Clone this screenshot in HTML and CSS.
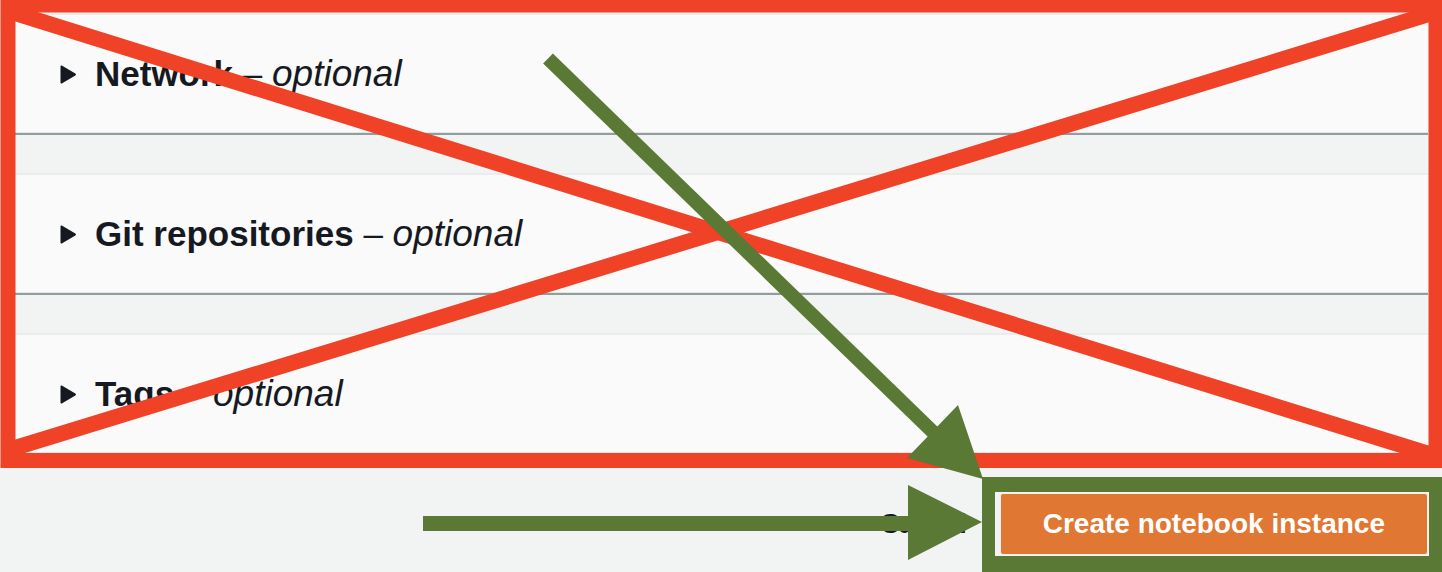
FILE: index.html
```html
<!DOCTYPE html>
<html lang="en">
<head>
<meta charset="utf-8">
<title>Create notebook instance</title>
<link rel="stylesheet" href="styles.css">
</head>
<body>
<main class="page">
  <section class="card">
    <div class="card-header">
      <svg class="caret" viewBox="0 0 16 19" width="16" height="19" aria-hidden="true"><path d="M1.6 1.6 L14.8 9.5 L1.6 17.4 Z"/></svg>
      <h2 class="title"><span class="name">Network</span> <span class="dash">–</span> <em class="opt">optional</em></h2>
    </div>
  </section>
  <section class="card">
    <div class="card-header">
      <svg class="caret" viewBox="0 0 16 19" width="16" height="19" aria-hidden="true"><path d="M1.6 1.6 L14.8 9.5 L1.6 17.4 Z"/></svg>
      <h2 class="title"><span class="name">Git repositories</span> <span class="dash">–</span> <em class="opt">optional</em></h2>
    </div>
  </section>
  <section class="card">
    <div class="card-header">
      <svg class="caret" viewBox="0 0 16 19" width="16" height="19" aria-hidden="true"><path d="M1.6 1.6 L14.8 9.5 L1.6 17.4 Z"/></svg>
      <h2 class="title"><span class="name">Tags</span> <span class="dash">–</span> <em class="opt">optional</em></h2>
    </div>
  </section>
  <div class="actions">
    <a class="btn-link" href="#">Cancel</a>
    <button class="btn-primary" type="button">Create notebook instance</button>
  </div>
</main>
<svg class="annot" width="1442" height="572" viewBox="0 0 1442 572" aria-hidden="true">
  <g class="red">
    <rect x="8" y="5" width="1428" height="455.5"/>
    <line x1="8" y1="11" x2="1436" y2="456"/>
    <line x1="8" y1="450" x2="1436" y2="12"/>
  </g>
  <g class="green">
    <line class="shaft" x1="548" y1="58.5" x2="934" y2="433"/>
    <polygon points="907,458 958,405 983,479"/>
    <line class="shaft2" x1="423" y1="523.5" x2="912" y2="523.5"/>
    <polygon points="908,485 908,560 982,522"/>
    <path fill-rule="evenodd" d="M982 477H1444V572H982Z M995 492H1429V556H995Z"/>
  </g>
</svg>
</body>
</html>
```

FILE: styles.css
```css
html, body {
  margin: 0;
  padding: 0;
}

body {
  width: 1442px;
  height: 572px;
  overflow: hidden;
  background: #f2f3f3;
  font-family: "Liberation Sans", Arial, sans-serif;
  color: #16191f;
  position: relative;
}

.page {
  display: flex;
  flex-direction: column;
  gap: 40px;
  padding: 13px 14px 0 14px;
}

.card {
  height: 120px;
  box-sizing: border-box;
  background: #fafafa;
  border-top: 2px solid #eaeded;
  border-bottom: 1px solid #e3e6e6;
  box-shadow: 0 2px 0 0 #919d9f;
  display: flex;
  align-items: center;
}

.card-header {
  display: flex;
  align-items: center;
  gap: 19px;
  padding-left: 46px;
  padding-top: 1px;
}

.caret {
  display: block;
  fill: #16191f;
  stroke: #16191f;
  stroke-width: 2.2;
  stroke-linejoin: round;
}

.title {
  margin: 0;
  font-size: 35px;
  line-height: 44px;
  font-weight: 400;
  white-space: nowrap;
}

.name {
  font-weight: 700;
}

.opt {
  font-size: 37px;
  font-style: italic;
  font-weight: 400;
}

.actions {
  display: flex;
  justify-content: flex-end;
  align-items: center;
  gap: 34px;
}

.btn-link {
  font-size: 28px;
  font-weight: 700;
  letter-spacing: -1px;
  color: #16191f;
  text-decoration: none;
  line-height: 62px;
}

.btn-primary {
  height: 62px;
  box-sizing: border-box;
  padding: 0 42px;
  border: 1px solid #f4efea;
  border-radius: 3px;
  background: #e07733;
  color: #ffffff;
  font-family: "Liberation Sans", Arial, sans-serif;
  font-size: 28px;
  font-weight: 700;
  line-height: 1;
}

.annot {
  position: absolute;
  top: 0;
  left: 0;
  pointer-events: none;
}

.red rect,
.red line {
  fill: none;
  stroke: #ef4227;
  stroke-width: 15;
}

.red line {
  stroke-width: 15.5;
}

.green line {
  stroke: #5a7934;
  stroke-width: 14;
}

.green .shaft2 {
  stroke-width: 15;
}

.green polygon,
.green path {
  fill: #5a7934;
}
```
